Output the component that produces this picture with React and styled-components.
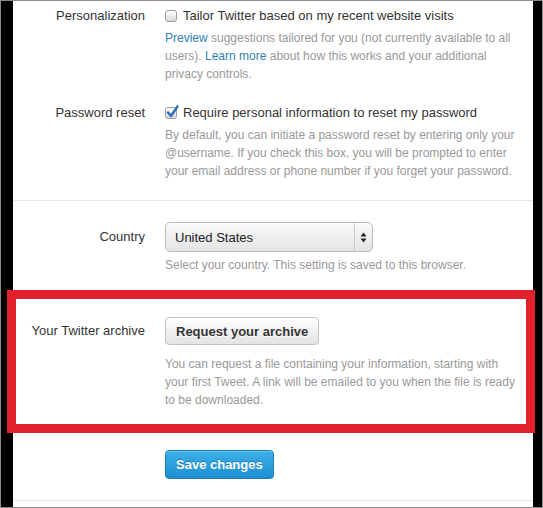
import React from "react";
import styled, { createGlobalStyle } from "styled-components";

const GlobalStyle = createGlobalStyle`
  html, body { margin: 0; padding: 0; background: #fff; }
  body { font-family: "Liberation Sans", Arial, Helvetica, sans-serif; }
`;

const Frame = styled.div`
  width: 543px;
  height: 508px;
  box-sizing: border-box;
  border: 1px solid #8c8c8c;
  background: #000;
  display: flex;
  overflow: hidden;
`;

const Panel = styled.main`
  margin-left: 12px;
  width: 520px;
  background: #fff;
  display: flex;
  flex-direction: column;
  position: relative;
`;

const Section = styled.section`
  position: relative;
  padding: ${(p) => p.$pad};
  margin-top: ${(p) => p.$mt || 0}px;
  border-bottom: ${(p) => (p.$divider ? "1px solid #e6e6e6" : "none")};
  display: flex;
  flex-direction: column;
  gap: ${(p) => p.$gap || 0}px;
`;

/* Red highlight frame drawn over the archive block */
const Highlight = styled.div`
  position: absolute;
  top: 0;
  bottom: 0;
  left: -6px;
  right: -2px;
  border: 9px solid #e3212b;
  pointer-events: none;
`;

const Row = styled.div`
  display: grid;
  grid-template-columns: 132px 1fr;
  column-gap: 20px;
`;

const Label = styled.div`
  text-align: right;
  font-size: 13px;
  line-height: 18px;
  color: #333;
  padding-top: ${(p) => p.$offset || 0}px;
`;

const Field = styled.div`
  display: flex;
  flex-direction: column;
  align-items: flex-start;
`;

const CheckLine = styled.label`
  display: flex;
  align-items: center;
  gap: 6px;
  font-size: 13px;
  line-height: 18px;
  color: #333;
`;

const Box = styled.span`
  position: relative;
  width: 10px;
  height: 10px;
  border: 1px solid #9c9c9c;
  border-radius: 3px;
  background: linear-gradient(#fefefe, #d9d9d9);
  box-shadow: inset 0 1px 0 #fff;
  flex: none;
  svg {
    position: absolute;
    left: 0px;
    top: -3px;
  }
`;

const Help = styled.p`
  margin: ${(p) => p.$mt || 4}px 0 0;
  font-size: 12px;
  line-height: 18px;
  color: #999;
  max-width: 352px;
`;

const Link = styled.a`
  color: #2f7fb6;
  text-decoration: none;
`;

const Select = styled.div`
  box-sizing: border-box;
  width: 208px;
  height: 30px;
  display: flex;
  align-items: stretch;
  border: 1px solid #b9b9b9;
  border-radius: 5px;
  background: linear-gradient(#fafafa, #e4e4e4);
  box-shadow: inset 0 1px 0 #fff;
  font-size: 13px;
  color: #222;
`;

const SelectValue = styled.span`
  flex: 1;
  display: flex;
  align-items: center;
  padding-left: 9px;
`;

const SelectArrows = styled.span`
  width: 17px;
  border-left: 1px solid #c9c9c9;
  display: flex;
  align-items: center;
  justify-content: center;
`;

const Button = styled.button`
  box-sizing: border-box;
  height: ${(p) => (p.$primary ? 29 : 28)}px;
  padding: 0 10px;
  border-radius: 4px;
  font-family: inherit;
  font-size: 13px;
  font-weight: bold;
  cursor: pointer;
  border: 1px solid ${(p) => (p.$primary ? "#1b7fbb" : "#c4c4c4")};
  color: ${(p) => (p.$primary ? "#fff" : "#333")};
  background: ${(p) =>
    p.$primary
      ? "linear-gradient(#3cb0ea, #1d8fd0)"
      : "linear-gradient(#ffffff, #e3e3e3)"};
  text-shadow: ${(p) => (p.$primary ? "0 -1px 0 rgba(0,0,0,0.25)" : "0 1px 0 #fff")};
  box-shadow: ${(p) =>
    p.$primary ? "inset 0 1px 0 rgba(255,255,255,0.25)" : "inset 0 1px 0 #fff"};
`;

const Checkbox = ({ checked }) => (
  <Box>
    {checked && (
      <svg width="13" height="14" viewBox="0 0 13 14">
        <path
          d="M2 7.5 L5 11 L11.5 1.5"
          fill="none"
          stroke="#2a6fb8"
          strokeWidth="2.4"
          strokeLinecap="round"
          strokeLinejoin="round"
        />
      </svg>
    )}
  </Box>
);

export default function App() {
  return (
    <>
      <GlobalStyle />
      <Frame>
        <Panel>
          <Section $pad="6px 0 20px" $gap={21} $divider>
            <Row>
              <Label>Personalization</Label>
              <Field>
                <CheckLine>
                  <Checkbox />
                  Tailor Twitter based on my recent website visits
                </CheckLine>
                <Help>
                  <Link>Preview</Link> suggestions tailored for you (not currently
                  available to all users). <Link>Learn more</Link> about how this
                  works and your additional privacy controls.
                </Help>
              </Field>
            </Row>
            <Row>
              <Label>Password reset</Label>
              <Field>
                <CheckLine>
                  <Checkbox checked />
                  Require personal information to reset my password
                </CheckLine>
                <Help>
                  By default, you can initiate a password reset by entering only your
                  @username. If you check this box, you will be prompted to enter
                  your email address or phone number if you forget your password.
                </Help>
              </Field>
            </Row>
          </Section>

          <Section $pad="21px 0 0">
            <Row>
              <Label $offset={6}>Country</Label>
              <Field>
                <Select>
                  <SelectValue>United States</SelectValue>
                  <SelectArrows>
                    <svg width="7" height="11" viewBox="0 0 7 11">
                      <path d="M3.5 0.5 L6.5 4.5 L0.5 4.5 Z" fill="#222" />
                      <path d="M3.5 10.5 L6.5 6.5 L0.5 6.5 Z" fill="#222" />
                    </svg>
                  </SelectArrows>
                </Select>
                <Help>Select your country. This setting is saved to this browser.</Help>
              </Field>
            </Row>
          </Section>

          <Section $pad="27px 0 24px" $mt={16}>
            <Row>
              <Label $offset={5}>Your Twitter archive</Label>
              <Field>
                <Button>Request your archive</Button>
                <Help $mt={10}>
                  You can request a file containing your information, starting with
                  your first Tweet. A link will be emailed to you when the file is
                  ready to be downloaded.
                </Help>
              </Field>
            </Row>
            <Highlight />
          </Section>

          <Section $pad="17px 0 21px" $divider>
            <Row>
              <span />
              <Field>
                <Button $primary>Save changes</Button>
              </Field>
            </Row>
          </Section>
        </Panel>
      </Frame>
    </>
  );
}
